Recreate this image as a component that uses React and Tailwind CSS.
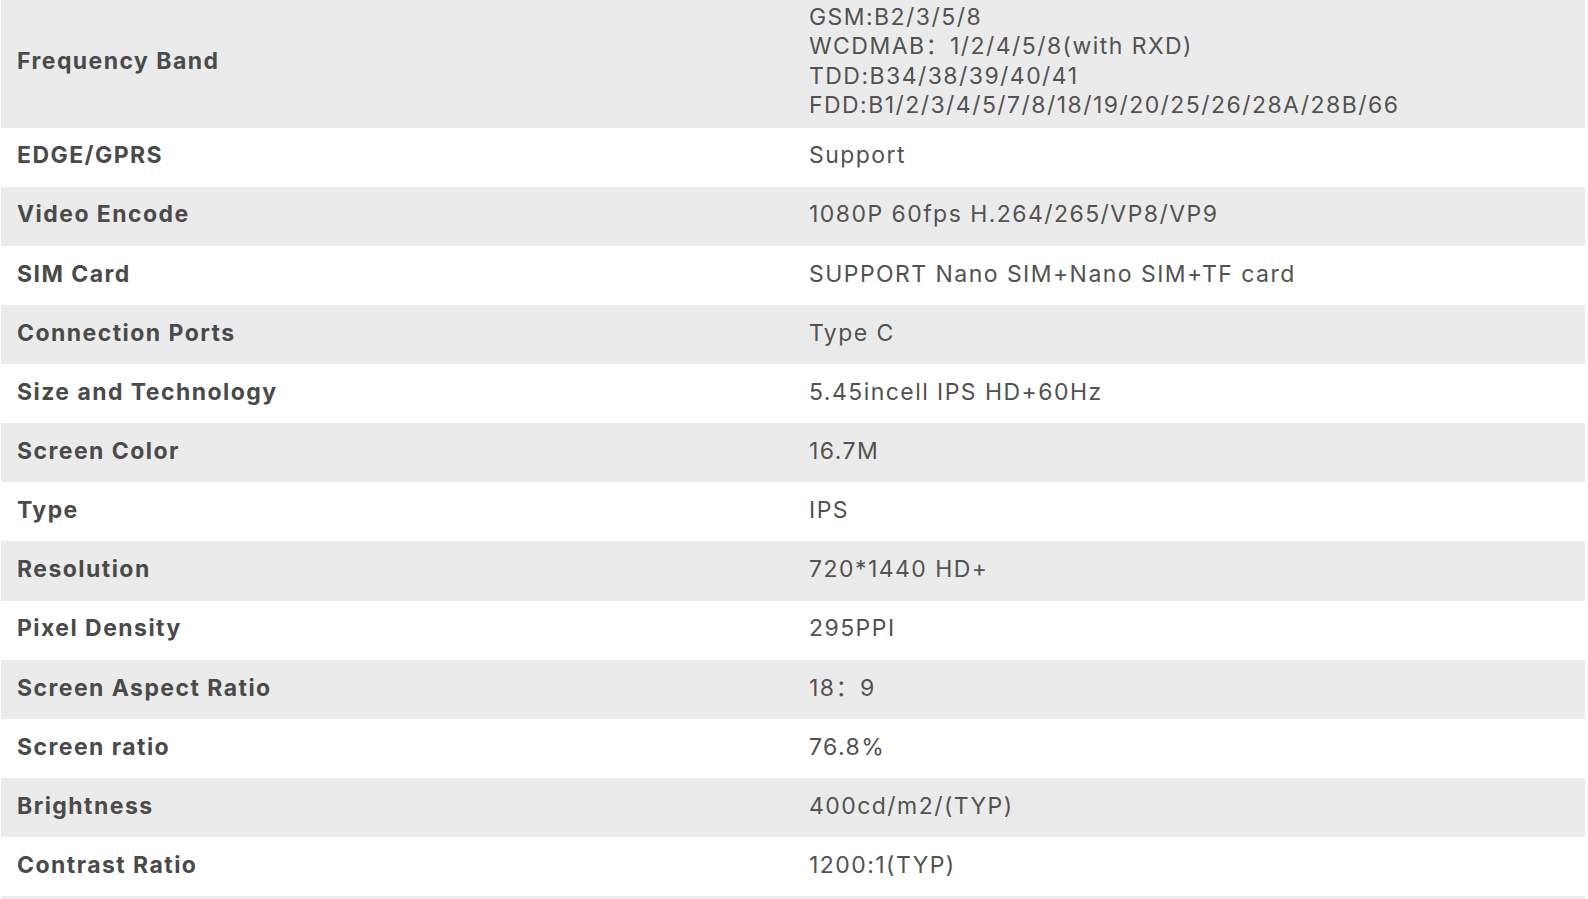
import React from 'react';

const SPECS = [
  {
    label: 'Frequency Band',
    value: [
      'GSM:B2/3/5/8',
      'WCDMAB：1/2/4/5/8(with RXD)',
      'TDD:B34/38/39/40/41',
      'FDD:B1/2/3/4/5/7/8/18/19/20/25/26/28A/28B/66',
    ],
  },
  { label: 'EDGE/GPRS', value: 'Support' },
  { label: 'Video Encode', value: '1080P 60fps H.264/265/VP8/VP9' },
  { label: 'SIM Card', value: 'SUPPORT Nano SIM+Nano SIM+TF card' },
  { label: 'Connection Ports', value: 'Type C' },
  { label: 'Size and Technology', value: '5.45incell IPS HD+60Hz' },
  { label: 'Screen Color', value: '16.7M' },
  { label: 'Type', value: 'IPS' },
  { label: 'Resolution', value: '720*1440 HD+' },
  { label: 'Pixel Density', value: '295PPI' },
  { label: 'Screen Aspect Ratio', value: '18：9' },
  { label: 'Screen ratio', value: '76.8%' },
  { label: 'Brightness', value: '400cd/m2/(TYP)' },
  { label: 'Contrast Ratio', value: '1200:1(TYP)' },
  { label: '', value: '' },
];

function SpecRow({ spec, index }) {
  const multi = Array.isArray(spec.value);
  return (
    <div
      className={`grid grid-cols-2 items-center ${index % 2 === 0 ? 'bg-[#ebebeb]' : 'bg-white'} ${
        multi ? 'h-[127.5px] pb-[4px]' : 'h-[59.15px] pb-[2px]'
      }`}
    >
      <div className="px-4 font-bold text-[23px] leading-[29.5px] tracking-[1.45px] text-[#4a4a4a]">{spec.label}</div>
      <div className="px-4 text-[23px] leading-[29.5px] tracking-[1.45px] text-[#525252]">
        {multi ? spec.value.map((line) => <div key={line}>{line}</div>) : spec.value}
      </div>
    </div>
  );
}

export default function App() {
  return (
    <div className="h-[899px] overflow-hidden bg-white pl-px pr-[3px] font-['Inter','Noto_Sans_CJK_SC',sans-serif]">
      {SPECS.map((spec, i) => (
        <SpecRow key={i} spec={spec} index={i} />
      ))}
    </div>
  );
}
